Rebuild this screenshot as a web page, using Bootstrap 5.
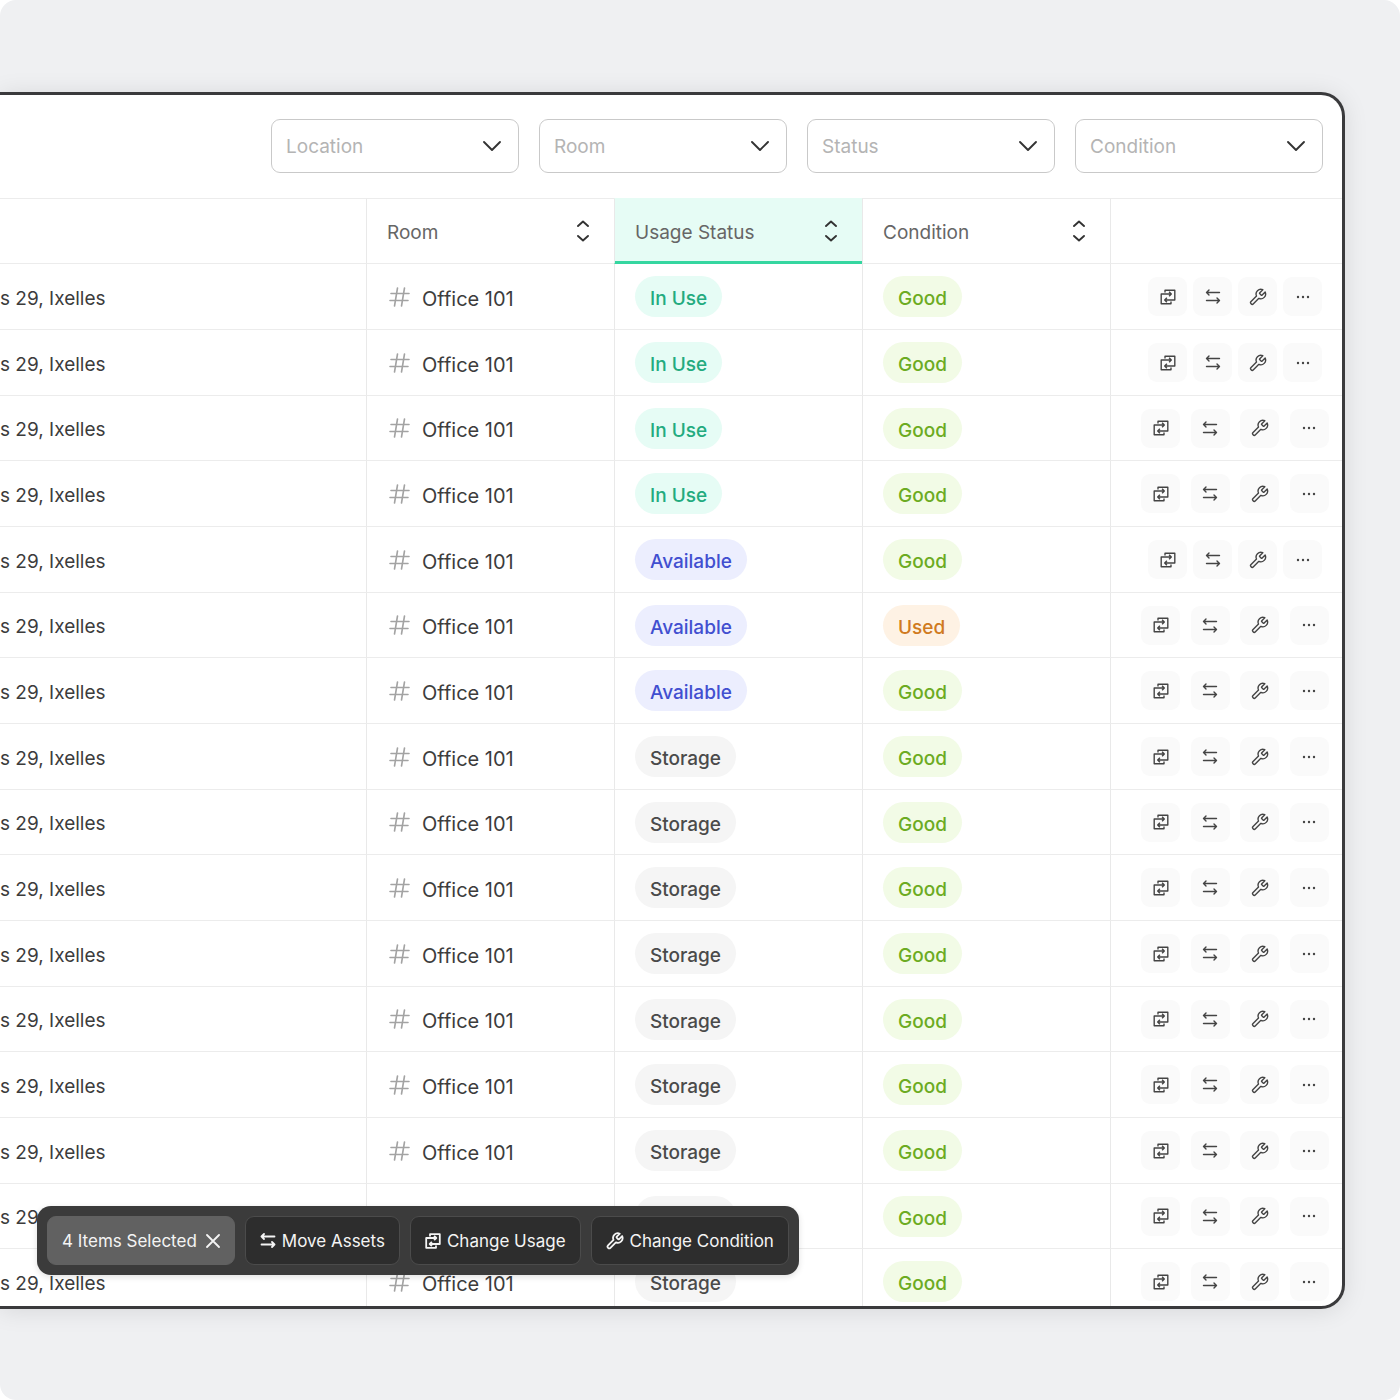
<!DOCTYPE html>
<html lang="en">
<head>
<meta charset="utf-8">
<meta name="viewport" content="width=device-width, initial-scale=1">
<title>Assets</title>
<link href="https://cdn.jsdelivr.net/npm/bootstrap@5.3.0/dist/css/bootstrap.min.css" rel="stylesheet">
<style>
  html { background: #fff; }
  body { font-family: Inter, "Liberation Sans", sans-serif; font-size: 19px; line-height: 24px; color: #3c3c3c; background: #fff; }
  .stage { height: 100vh; padding: 92px 55px 91px 0; background: #eff0f2; border-radius: 16px; }
  .panel { border: 3px solid #3a3a3c; border-left: 0; border-radius: 0 24px 24px 0; box-shadow: 0 2px 24px rgba(0, 0, 0, .1); }
  .filters { gap: 20px; padding: 24px 19px 25px; }
  .filters .form-select {
    width: 248px; height: 54px; padding: 3px 48px 0 14px; border: 1px solid #c9c9c9; border-radius: 9px;
    font-size: 19px; font-weight: 400; color: #b4b4b4; background-color: #fff;
    background-image: url("data:image/svg+xml,%3Csvg xmlns='http://www.w3.org/2000/svg' viewBox='0 0 20 12'%3E%3Cpath d='M2 2 10 10l8-8' fill='none' stroke='%23333' stroke-width='1.900' stroke-linecap='round' stroke-linejoin='round'/%3E%3C/svg%3E");
    background-size: 20px 12px; background-position: right 16px center;
  }
  .assets { table-layout: fixed; width: 100%; margin: 0; border-collapse: separate; border-spacing: 0; }
  .assets th, .assets td { padding: 0 0 0 20px; border-left: 1px solid #e9e9e9; border-bottom: 1px solid #ececec; vertical-align: middle; }
  .assets th { height: 66px; font-weight: 400; border-top: 1px solid #ececec; }
  .assets td { height: 66px; white-space: nowrap; }
  .assets tr:nth-child(3n) td { height: 65px; }
  .assets th:first-child, .assets td:first-child { border-left: 0; padding-left: 0; }
  .col-std { width: 248px; }
  .col-act { width: 232px; }
  .assets th.sorted { background: #e6fcf5; border-top-color: #e6fcf5; box-shadow: inset 0 -2px #35d6a0; border-bottom-color: #35d6a0; }
  .sorter { width: 100%; padding: 0 25px 0 0; border: 0; background: none; color: #666; text-align: left; }
  .sorter span { padding-top: 3px; }
  .sorter svg { width: 12px; height: 22px; color: #333; }
  .place { padding-top: 4px; }
  .room { gap: 12px; padding-left: 2px; font-size: 20px; }
  .room span { padding-top: 4px; }
  .room svg { width: 21px; height: 20px; color: #a3a3a3; }
  .pill { display: inline-block; height: 41px; padding: 11px 15px 6px; border-radius: 21px; font-weight: 500; vertical-align: middle; }
  .pill-inuse { color: #23ab7f; background: #e6fcf5; }
  .pill-available { color: #414fd0; background: #eceefe; }
  .pill-storage { color: #4a4a4a; background: #f5f5f5; }
  .pill-good { color: #6cab22; background: #f2fbe6; }
  .pill-used { color: #d07a20; background: #fef2e4; }
  .acts { width: 188px; margin-right: 13px; }
  .acts-tight { width: 174px; margin-right: 20px; }
  .act { width: 39px; height: 39px; padding: 0; border: 0; border-radius: 9px; background: #fafafa; color: #444; }
  .act svg { stroke-width: 1.4; }
  .ic-usage { width: 16px; height: 16px; }
  .ic-move { width: 16px; height: 15px; }
  .ic-wrench { width: 18px; height: 18px; }
  .ic-dots { width: 14px; height: 4px; }
  .bulk { left: 37px; bottom: 31px; gap: 10px; padding: 10px; border-radius: 14px; background: #3b3b3b; box-shadow: 0 2px 6px rgba(0, 0, 0, .12); }
  .bulk button { height: 49px; gap: 6px; padding: 0 14px; border: 1px solid #4b4b4b; border-radius: 9px; background: #2d2d2d; color: #f4f4f4; font-size: 17px; white-space: nowrap; }
  .bulk .count { background: #616161; border-color: #616161; gap: 9px; }
  .bulk .count svg { width: 14px; height: 14px; }
  .bulk svg { stroke-width: 1.8; }
</style>
</head>
<body>
<svg class="d-none" aria-hidden="true">
  <symbol id="usage" viewBox="0 0 16 16"><path d="M5 3.600V1.200H14.800V11H4.700M6.900 8.800 4.700 11l2.200 2.200M11 12.400v2.400H1.200V5H11.300M9.100 2.800 11.300 5 9.100 7.200" fill="none" stroke="currentColor" stroke-linejoin="round"/></symbol>
  <symbol id="move" viewBox="0 0 16 15"><path d="M14.500 3.500H1.500M4 1 1.500 3.500 4 6M1.500 11.500h13M12 9l2.500 2.500L12 14" fill="none" stroke="currentColor" stroke-linecap="round" stroke-linejoin="round"/></symbol>
  <symbol id="wrench" viewBox="0 0 18 18"><path transform="translate(-.8 -.3) scale(.79)" vector-effect="non-scaling-stroke" d="M14.700 6.300a1 1 0 0 0 0 1.400l1.600 1.600a1 1 0 0 0 1.400 0l3.770-3.770a6 6 0 0 1-7.940 7.940l-6.910 6.910a2.120 2.120 0 0 1-3-3l6.910-6.910a6 6 0 0 1 7.940-7.940l-3.760 3.760z" fill="none" stroke="currentColor" stroke-linejoin="round"/></symbol>
  <symbol id="dots" viewBox="0 0 14 4"><g fill="currentColor"><circle cx="2" cy="2" r="1.200"/><circle cx="7" cy="2" r="1.200"/><circle cx="12" cy="2" r="1.200"/></g></symbol>
  <symbol id="hash" viewBox="0 0 21 20"><path d="M8.500 1l-3 18M15.500 1l-3 18M2 6.500h18M1 13.500h18" fill="none" stroke="currentColor" stroke-width="1.600" stroke-linecap="round"/></symbol>
  <symbol id="sort" viewBox="0 0 12 22"><path d="M1 6 6 1.500 11 6M1 16l5 4.500 5-4.500" fill="none" stroke="currentColor" stroke-width="1.900" stroke-linecap="round" stroke-linejoin="round"/></symbol>
  <symbol id="close" viewBox="0 0 14 14"><path d="M1 1l12 12M13 1 1 13" fill="none" stroke="currentColor" stroke-linecap="round"/></symbol>
</svg>

<main class="stage">
  <section class="panel position-relative h-100 overflow-hidden bg-white">
    <form class="filters d-flex justify-content-end">
      <select class="form-select" aria-label="Location"><option>Location</option></select>
      <select class="form-select" aria-label="Room"><option>Room</option></select>
      <select class="form-select" aria-label="Status"><option>Status</option></select>
      <select class="form-select" aria-label="Condition"><option>Condition</option></select>
    </form>

    <table class="assets">
      <colgroup><col><col class="col-std"><col class="col-std"><col class="col-std"><col class="col-act"></colgroup>
      <thead>
        <tr>
          <th></th>
          <th scope="col"><button type="button" class="sorter d-flex align-items-center justify-content-between"><span>Room</span><svg><use href="#sort"/></svg></button></th>
          <th scope="col" class="sorted" aria-sort="ascending"><button type="button" class="sorter d-flex align-items-center justify-content-between"><span>Usage Status</span><svg><use href="#sort"/></svg></button></th>
          <th scope="col"><button type="button" class="sorter d-flex align-items-center justify-content-between"><span>Condition</span><svg><use href="#sort"/></svg></button></th>
          <th></th>
        </tr>
      </thead>
      <tbody id="rows"></tbody>
    </table>

    <div class="bulk position-absolute d-flex" role="toolbar" aria-label="Bulk actions">
      <button type="button" class="count d-flex align-items-center">4 Items Selected<svg><use href="#close"/></svg></button>
      <button type="button" class="d-flex align-items-center"><svg class="ic-move"><use href="#move"/></svg>Move Assets</button>
      <button type="button" class="d-flex align-items-center"><svg class="ic-usage"><use href="#usage"/></svg>Change Usage</button>
      <button type="button" class="d-flex align-items-center"><svg class="ic-wrench"><use href="#wrench"/></svg>Change Condition</button>
    </div>
  </section>
</main>

<script src="https://cdn.jsdelivr.net/npm/bootstrap@5.3.0/dist/js/bootstrap.bundle.min.js"></script>
<script>
  const usage = [...Array(4).fill('In Use'), ...Array(3).fill('Available'), ...Array(9).fill('Storage')];
  const tight = [0, 1, 4];
  const actions = [['usage', 'Change usage'], ['move', 'Move'], ['wrench', 'Change condition'], ['dots', 'More']];
  const pill = t => `<span class="pill pill-${t.replace(' ', '').toLowerCase()}">${t}</span>`;
  document.getElementById('rows').innerHTML = usage.map((u, i) => `
    <tr>
      <td><div class="place">s 29, Ixelles</div></td>
      <td><div class="room d-flex align-items-center"><svg><use href="#hash"/></svg><span>Office 101</span></div></td>
      <td>${pill(u)}</td>
      <td>${pill(i === 5 ? 'Used' : 'Good')}</td>
      <td><div class="acts ${tight.includes(i) ? 'acts-tight' : ''} d-flex justify-content-between ms-auto">
        ${actions.map(([id, label]) => `<button type="button" class="act d-flex align-items-center justify-content-center" aria-label="${label}"><svg class="ic-${id}"><use href="#${id}"/></svg></button>`).join('')}
      </div></td>
    </tr>`).join('');
</script>
</body>
</html>
